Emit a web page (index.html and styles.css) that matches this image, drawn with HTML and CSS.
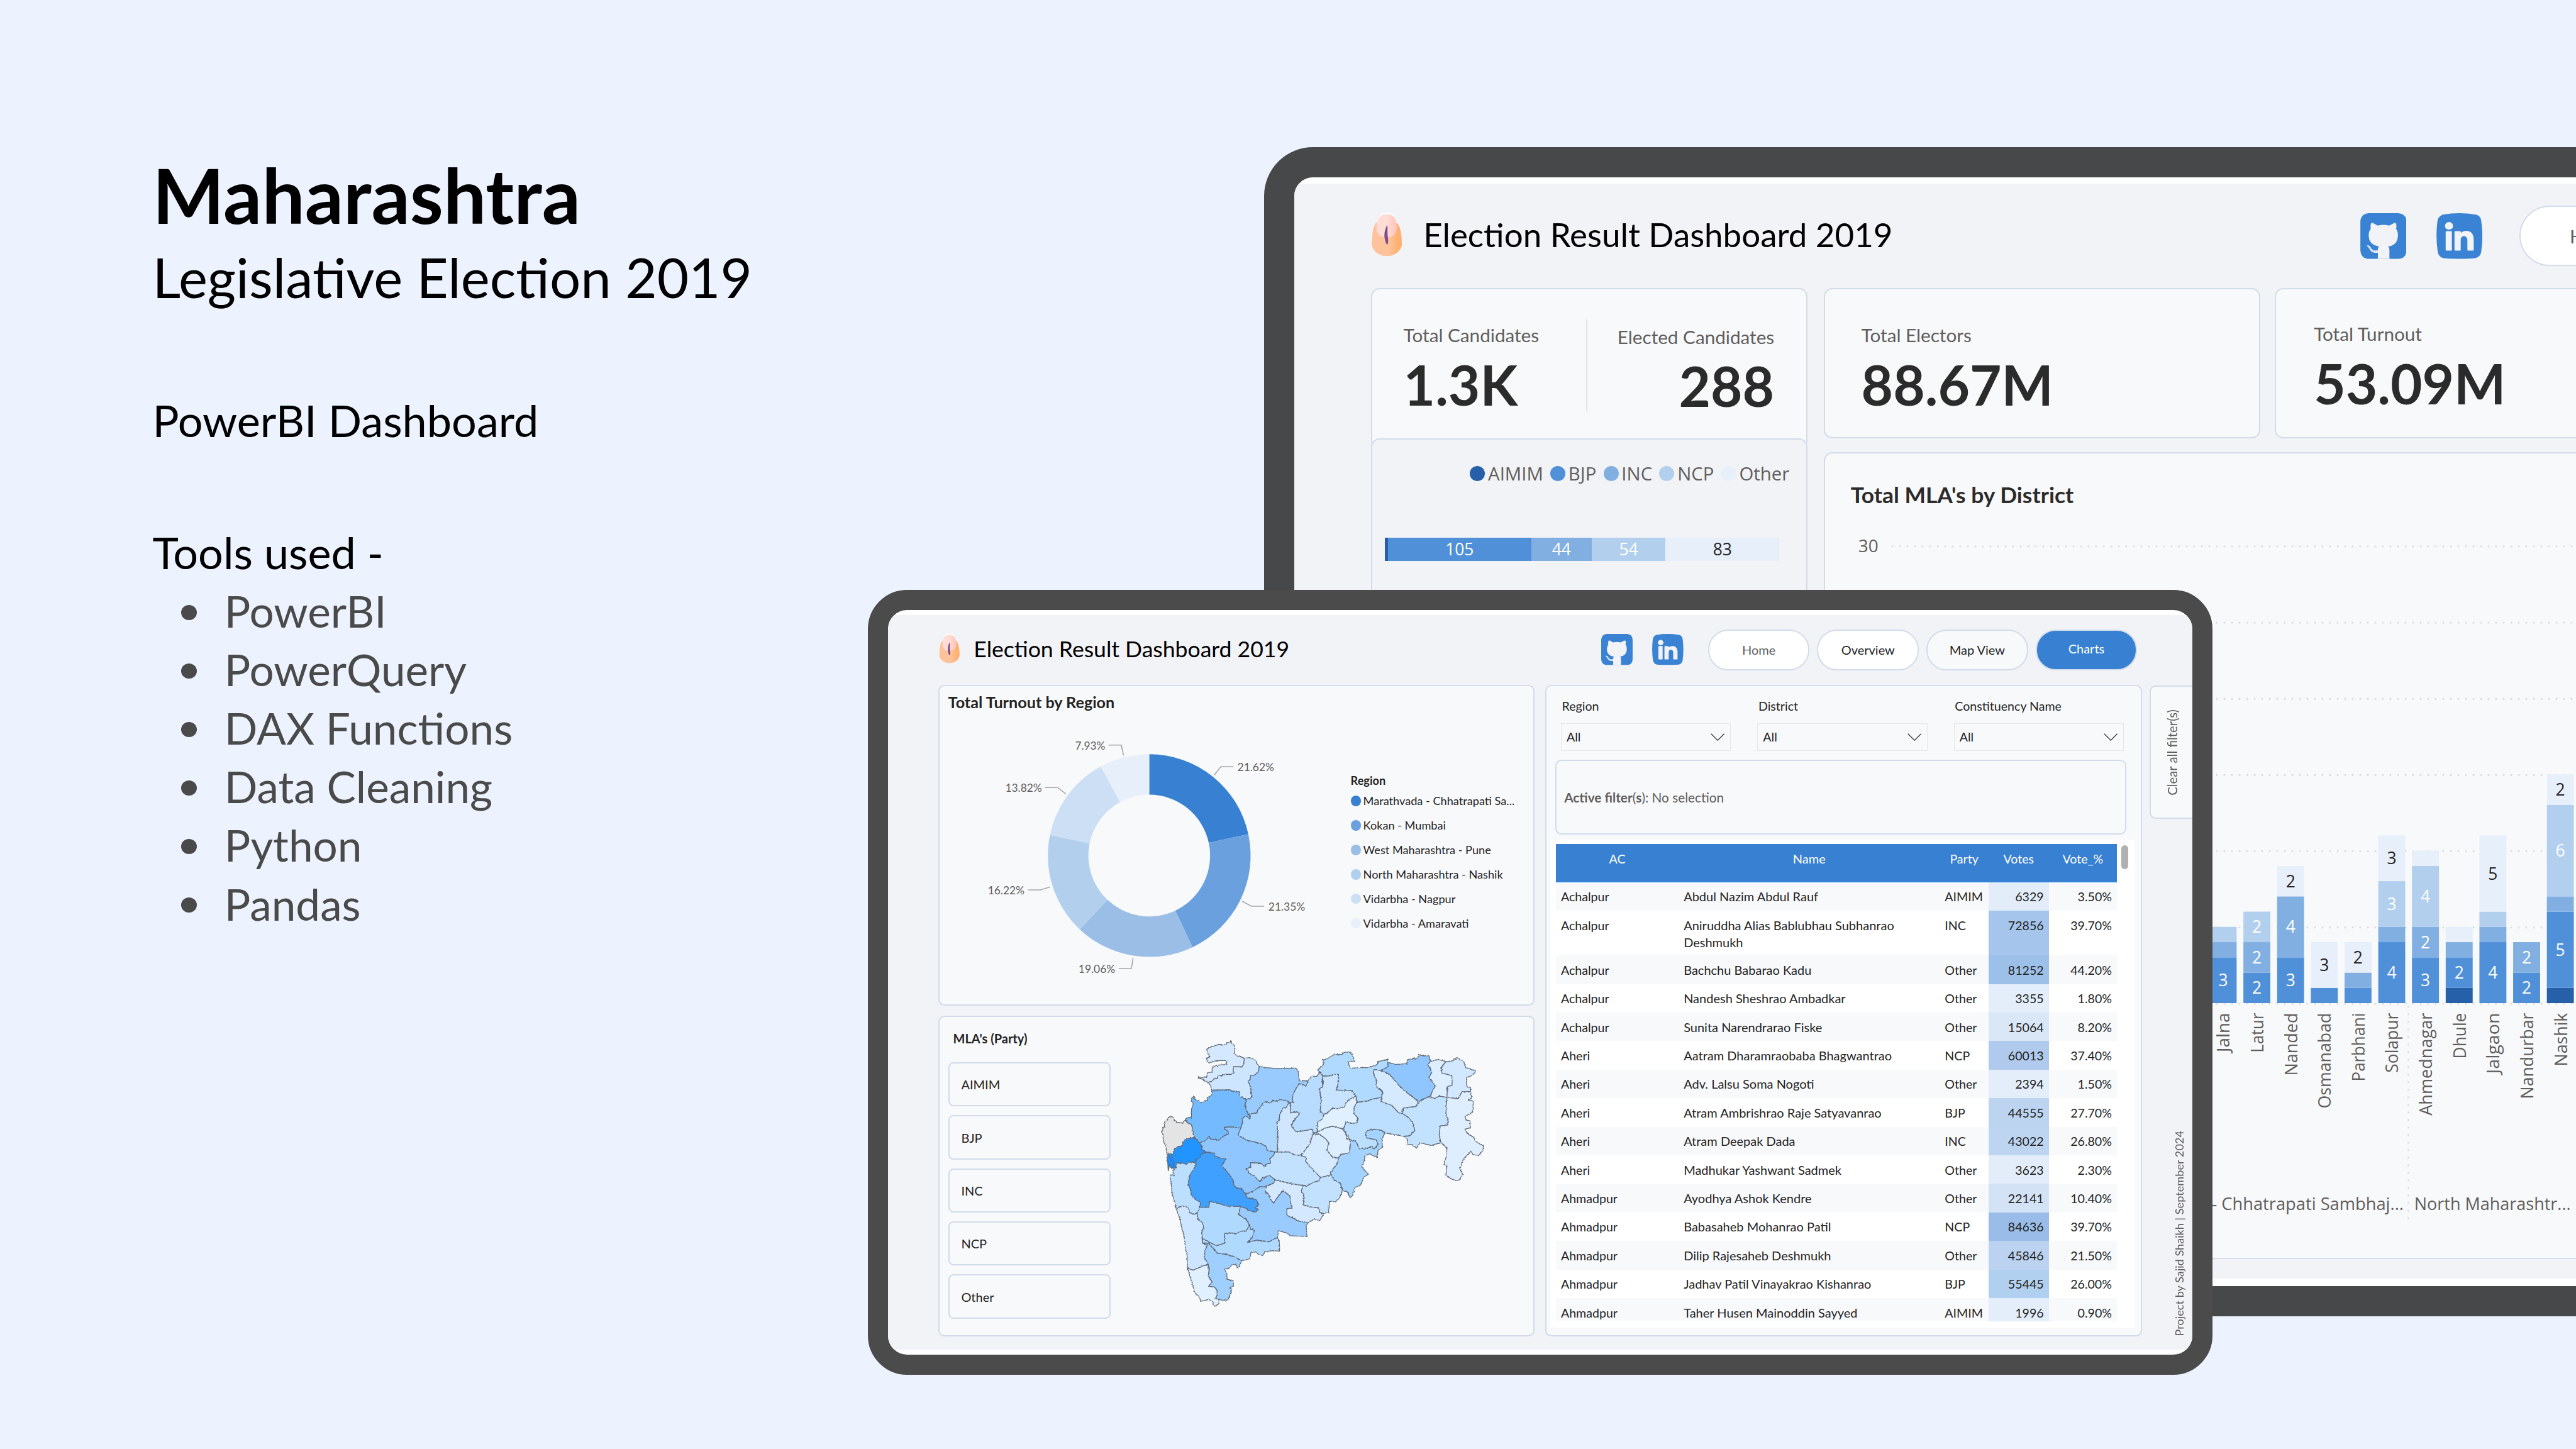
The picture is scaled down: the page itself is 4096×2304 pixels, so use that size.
FILE: index.html
```
<!DOCTYPE html>
<html lang="en">
<head>
<meta charset="utf-8">
<title>Maharashtra Legislative Election 2019</title>
<link rel="stylesheet" href="styles.css">
</head>
<body>
<svg class="defs" aria-hidden="true">
  <defs>
    <linearGradient id="skin" x1="0" x2="1" y1="0" y2="0"><stop offset=".55" stop-color="#ffc39b"/><stop offset=".85" stop-color="#ffb173"/></linearGradient>
    <linearGradient id="nail" x1="0" x2="1" y1="0" y2="0"><stop offset=".5" stop-color="#ffdcd5"/><stop offset="1" stop-color="#ffc3b9"/></linearGradient>
    <symbol id="finger" viewBox="0 0 181 262">
      <path d="M26 62C8 84 0 130 1 198C12 238 50 261 90 261C132 261 168 238 180 198C182 130 170 84 152 62Z" fill="url(#skin)"/>
      <path d="M32 56C38 20 60 0 90 0C120 0 142 20 148 56Z" fill="#fff"/>
      <path d="M34 56C38 24 62 9 90 9C118 9 142 24 146 56C150 72 152 80 151 96C150 128 124 150 90 150C56 150 30 128 29 96C28 80 30 72 34 56Z" fill="url(#nail)"/>
      <path d="M90 78C80 98 74 122 76 146C80 166 84 190 94 191C101 184 98 160 97 148C92 126 97 88 93 78Z" fill="#7d4f8c"/>
    </symbol>
    <symbol id="github" viewBox="0 0 276 274">
      <path d="M48 0H228Q276 6 276 50V224Q274 268 232 274H44Q4 268 0 224V50Q2 6 48 0Z" fill="#3a82d4"/>
      <path d="M62 94C60 78 61 66 66 58Q70 56 78 60L104 74Q138 66 172 74L198 61Q208 55 213 60C217 72 216 84 214 94Q225 108 225 134C223 172 205 194 166 199C171 204 174 212 174 222V268Q174 274 179 274H100Q105 274 105 268V236C86 239 68 236 58 220C52 210 48 200 38 196Q42 190 50 194C60 198 64 212 74 219C84 225 98 223 105 221Q104 206 112 199C72 193 50 172 50 134Q50 108 62 94Z" fill="#f1f3f7"/>
      <path d="M60 208l5 6M67 218l5 5M77 224l5 3M88 227h5M98 226h5" stroke="#3a82d4" stroke-width="3"/>
    </symbol>
    <symbol id="linkedin" viewBox="0 0 276 274">
      <path d="M38 8Q136 -8 236 8Q264 14 268 46Q281 136 268 230Q264 262 232 269Q136 278 40 269Q12 262 7 228Q-6 136 6 46Q10 18 38 8Z" fill="#3a82d4"/>
      <ellipse cx="75" cy="76" rx="24" ry="23" fill="#f1f3f7"/>
      <rect x="55" y="107" width="37" height="117" rx="5" fill="#f1f3f7"/>
      <path d="M108 112Q108 107 113 107H141Q146 107 146 119C158 104 190 100 208 116C220 128 223 142 223 160V219Q223 224 218 224H190Q185 224 185 219V160C182 130 146 130 145 160V219Q145 224 140 224H113Q108 224 108 219Z" fill="#f1f3f7"/>
    </symbol>
  </defs>
</svg>

<main class="stage">
  <section class="intro">
    <h1>Maharashtra</h1>
    <h2>Legislative Election 2019</h2>
    <p class="kind">PowerBI Dashboard</p>
    <p class="tools-title">Tools used -</p>
    <ul class="tools">
      <li>PowerBI</li>
      <li>PowerQuery</li>
      <li>DAX Functions</li>
      <li>Data Cleaning</li>
      <li>Python</li>
      <li>Pandas</li>
    </ul>
  </section>

  <section class="device device-back">
    <div class="screen">
      <header class="bar">
        <svg class="finger"><use href="#finger"/></svg>
        <div class="bar-title">Election Result Dashboard 2019</div>
        <svg class="logo"><use href="#github"/></svg>
        <svg class="logo"><use href="#linkedin"/></svg>
        <nav class="pills"><span class="pill muted">Home</span></nav>
      </header>
      <div class="overview">
        <div class="ov-left">
          <div class="card kpi-pair">
            <div class="kpi"><span class="kpi-label">Total Candidates</span><span class="kpi-value">1.3K</span></div>
            <div class="kpi-rule"></div>
            <div class="kpi kpi-right"><span class="kpi-label">Elected Candidates</span><span class="kpi-value">288</span></div>
          </div>
          <div class="card party-card">
            <div class="party-legend">
              <span class="key"><i class="dot c1"></i>AIMIM</span>
              <span class="key"><i class="dot c2"></i>BJP</span>
              <span class="key"><i class="dot c3"></i>INC</span>
              <span class="key"><i class="dot c4"></i>NCP</span>
              <span class="key"><i class="dot c5"></i>Other</span>
            </div>
            <div class="party-bar">
              <span class="c1" style="flex-grow:6"></span>
              <span class="c2" style="flex-grow:285">105</span>
              <span class="c3" style="flex-grow:120">44</span>
              <span class="c4" style="flex-grow:147">54</span>
              <span class="c5" style="flex-grow:226">83</span>
            </div>
          </div>
        </div>
        <div class="ov-right">
          <div class="kpi-row">
            <div class="card kpi-card"><div class="kpi"><span class="kpi-label">Total Electors</span><span class="kpi-value">88.67M</span></div></div>
            <div class="card kpi-card turnout"><div class="kpi"><span class="kpi-label">Total Turnout</span><span class="kpi-value">53.09M</span></div></div>
          </div>
          <div class="card chart-card">
            <svg class="district-chart" id="district" viewBox="3628 902 1792 1597"></svg>
          </div>
        </div>
      </div>
    </div>
  </section>

  <section class="device device-front">
    <div class="screen">
      <header class="bar">
        <svg class="finger"><use href="#finger"/></svg>
        <div class="bar-title">Election Result Dashboard 2019</div>
        <svg class="logo"><use href="#github"/></svg>
        <svg class="logo"><use href="#linkedin"/></svg>
        <nav class="pills">
          <span class="pill muted">Home</span>
          <span class="pill">Overview</span>
          <span class="pill soft">Map View</span>
          <span class="pill active">Charts</span>
        </nav>
      </header>
      <div class="charts">
        <div class="ch-left">
          <div class="card turnout-card">
            <div class="card-title">Total Turnout by Region</div>
            <div class="turnout-body">
              <svg class="donut" id="donut" viewBox="1867 1415 817 580"></svg>
              <div class="region-legend">
                <b>Region</b>
                <span><i class="d1"></i>Marathvada - Chhatrapati Sa...</span>
                <span><i class="d2"></i>Kokan - Mumbai</span>
                <span><i class="d3"></i>West Maharashtra - Pune</span>
                <span><i class="d4"></i>North Maharashtra - Nashik</span>
                <span><i class="d5"></i>Vidarbha - Nagpur</span>
                <span><i class="d6"></i>Vidarbha - Amaravati</span>
              </div>
            </div>
          </div>
          <div class="card map-card">
            <div class="party-list">
              <b>MLA's (Party)</b>
              <span>AIMIM</span><span>BJP</span><span>INC</span><span>NCP</span><span>Other</span>
            </div>
            <svg class="map" viewBox="0 0 1568 1568" preserveAspectRatio="none">
              <filter id="coast" x="-2%" y="-2%" width="104%" height="104%"><feTurbulence type="fractalNoise" baseFrequency=".11" numOctaves="2" seed="4"/><feDisplacementMap in="SourceGraphic" scale="9" xChannelSelector="R" yChannelSelector="G"/></filter>
              <g filter="url(#coast)">
              <polygon fill="#d4e9ff" points="265,123 285,110 322,96 330,101 352,98 355,88 366,87 373,77 378,93 388,101 389,148 400,158 413,163 433,171 431,202 422,218 385,217 383,232 385,251 376,258 348,258 315,268 312,283 305,278 285,296 272,303 262,295 250,292 256,286 232,281 226,271 240,277 266,271 267,248 289,247 290,219 317,208 352,205 355,190 345,183 305,185 282,195 273,198 263,170 281,165 272,150"/>
              <polygon fill="#cde5ff" points="433,171 458,168 470,175 483,182 488,199 500,215 495,245 478,262 463,262 458,285 450,295 461,325 463,350 467,378 458,388 441,392 413,377 411,352 380,348 369,342 287,343 283,318 272,303 285,296 305,278 312,283 315,268 348,258 376,258 385,251 383,232 385,217 422,218 431,202"/>
              <polygon fill="#99cbff" points="500,215 530,222 575,226 662,224 672,240 674,262 678,293 716,292 712,312 706,321 690,313 677,307 665,330 650,365 646,400 652,410 640,412 622,400 590,393 580,402 560,400 548,412 532,405 520,408 505,430 492,450 490,464 462,470 450,472 443,452 436,425 441,392 458,388 467,378 463,350 461,325 450,295 458,285 463,262 478,262 495,245"/>
              <polygon fill="#73baff" points="205,375 212,392 230,400 238,409 252,406 258,398 268,398 270,382 287,370 287,343 369,342 380,348 411,352 413,377 441,392 436,425 443,452 450,472 460,480 458,500 448,487 436,483 425,495 425,520 417,547 375,540 345,542 345,552 360,562 362,578 340,590 320,612 282,605 275,592 262,612 232,626 222,608 210,597 205,580 200,540 195,525 180,520 170,500 180,490 197,490 197,450 205,415 195,392 197,388"/>
              <polygon fill="#e4e4e4" points="170,505 180,520 195,525 200,540 205,580 210,597 175,605 160,622 158,640 130,650 122,660 112,690 97,684 88,684 82,640 75,625 72,585 65,570 68,548 78,540 76,515 90,502 96,488 105,483 118,490 120,505 130,510 132,518 148,515 158,522 165,505"/>
              <polygon fill="#2494ff" points="210,597 232,626 245,640 243,660 262,675 240,690 232,708 218,715 216,730 185,730 175,742 160,735 132,735 130,760 118,762 120,730 110,705 95,698 88,690 97,684 112,690 122,660 130,650 158,640 160,622 175,605"/>
              <polygon fill="#1a8aff" points="88,700 98,698 110,705 120,730 118,762 105,760 100,742 94,778 92,735"/>
              <polygon fill="#bcdeff" points="132,735 160,735 175,742 185,730 216,730 216,750 205,770 190,800 182,850 192,870 197,905 215,930 238,945 235,972 225,1000 210,1010 188,1000 185,975 165,965 145,970 130,982 122,940 112,905 108,860 102,800 112,797 122,805 115,785 120,762 130,760"/>
              <polygon fill="#cde5ff" points="130,982 145,970 165,965 185,975 188,1000 210,1010 222,1005 228,1040 245,1052 252,1080 243,1110 246,1165 268,1175 258,1205 255,1240 272,1278 240,1292 205,1310 180,1300 178,1230 170,1190 165,1130 152,1070 145,1030"/>
              <polygon fill="#e0f0ff" points="180,1300 205,1310 240,1292 272,1278 276,1310 272,1340 290,1375 272,1396 300,1400 312,1420 312,1445 305,1460 320,1468 320,1490 300,1505 292,1480 275,1467 240,1477 230,1450 212,1430 200,1380 190,1340"/>
              <polygon fill="#9ecfff" points="246,1163 272,1165 300,1200 310,1218 350,1225 395,1240 420,1260 415,1280 405,1298 395,1282 380,1278 365,1298 345,1305 355,1330 355,1358 385,1368 384,1395 365,1405 378,1412 370,1440 360,1470 345,1473 320,1468 305,1460 312,1445 312,1420 300,1400 272,1396 290,1375 272,1340 276,1310 272,1278 255,1240 258,1205 268,1175"/>
              <polygon fill="#afd9ff" points="246,1140 270,1155 308,1178 345,1165 345,1112 382,1110 395,1115 420,1100 440,1100 450,1080 455,1065 462,1090 478,1095 470,1130 450,1160 490,1148 520,1155 540,1158 562,1145 580,1135 588,1150 590,1208 560,1205 525,1210 515,1232 495,1225 485,1212 463,1213 457,1248 420,1260 395,1240 350,1225 310,1218 300,1200 272,1165 246,1163"/>
              <polygon fill="#afd9ff" points="235,972 275,972 278,940 320,952 355,965 415,968 408,1012 440,1035 455,1065 450,1080 440,1100 420,1100 395,1115 382,1110 345,1112 345,1165 308,1178 270,1155 246,1140 243,1110 252,1080 245,1052 228,1040 222,1005"/>
              <polygon fill="#3fa0ff" points="262,675 300,682 302,697 330,710 352,712 332,748 365,795 385,830 385,850 400,870 420,870 430,890 440,905 445,920 485,930 498,958 482,975 495,985 480,998 450,988 445,980 415,968 355,965 320,952 278,940 275,972 235,972 238,945 215,930 197,905 192,870 182,850 190,800 205,770 216,750 218,715 232,708 240,690"/>
              <polygon fill="#8fc6ff" points="232,626 262,612 275,592 282,605 320,612 340,590 362,578 360,562 345,552 345,542 375,540 417,547 405,582 440,610 505,628 530,645 535,665 568,675 565,690 548,710 550,735 530,740 525,755 505,735 460,733 462,755 442,765 455,790 478,805 500,833 515,815 545,800 570,825 565,840 530,862 500,862 480,880 445,900 430,890 420,870 400,870 385,850 385,830 365,795 332,748 352,712 330,710 302,697 300,682 262,675 243,660 245,640"/>
              <polygon fill="#abd6ff" points="425,495 436,483 448,487 458,500 460,480 450,472 462,470 490,464 492,450 505,430 520,408 532,405 548,412 560,400 580,402 590,393 622,400 635,412 620,435 605,440 590,475 588,510 577,515 580,545 582,600 580,675 568,675 535,665 530,645 505,628 440,610 405,582 417,547 425,520"/>
              <polygon fill="#d0e6ff" points="605,440 620,435 630,412 638,412 640,465 660,460 680,467 650,512 642,537 665,567 735,553 740,572 725,630 700,670 685,695 655,690 632,675 580,675 582,600 580,545 577,515 588,510 590,475"/>
              <polygon fill="#b8dcff" points="716,292 732,268 756,268 770,245 778,265 782,325 768,335 775,400 770,460 790,470 778,500 760,515 757,570 740,572 735,553 665,567 642,537 650,512 680,467 660,460 640,465 638,412 652,410 646,400 650,365 665,330 677,307 690,313 706,321 712,312"/>
              <polygon fill="#c8e3ff" points="782,267 822,265 830,258 852,258 853,290 844,342 912,345 930,375 905,390 885,410 880,430 850,442 825,440 800,468 790,470 770,460 775,400 768,335 782,325"/>
              <polygon fill="#b0daff" points="758,235 785,205 783,180 800,175 835,150 868,152 872,140 905,138 918,165 925,188 895,190 905,225 940,222 985,222 1025,205 1027,188 1062,182 1072,175 1072,218 1042,237 1010,232 1008,255 1020,285 1022,325 1048,350 1045,382 1005,390 980,402 935,408 930,375 912,345 844,342 853,290 852,258 830,258 822,265 782,267 776,250"/>
              <polygon fill="#e0f0ff" points="930,375 935,408 922,435 922,470 937,490 935,520 910,522 885,515 880,540 868,550 825,537 790,548 757,570 760,515 778,500 790,470 800,468 825,440 850,442 880,430 885,410 905,390"/>
              <polygon fill="#dceeff" points="757,570 790,548 825,537 868,550 885,575 888,605 905,610 900,680 860,690 850,708 822,700 800,665 808,625 795,605 770,582 750,580"/>
              <polygon fill="#d6eaff" points="740,572 750,580 770,582 795,605 808,625 800,665 822,700 852,708 845,740 815,785 820,797 772,812 745,780 705,725 710,705 685,695 700,670 725,630"/>
              <polygon fill="#c1e1ff" points="568,675 632,675 655,690 685,695 710,705 705,725 745,780 772,812 765,830 740,838 712,857 675,852 640,845 570,825 545,800 515,815 500,833 478,805 455,790 442,765 462,755 460,733 505,735 525,755 530,740 550,735 548,710 565,690"/>
              <polygon fill="#d4e9ff" points="570,825 640,845 675,852 695,855 685,890 697,900 697,960 735,972 765,975 768,1000 785,1010 768,1045 745,1035 718,1055 675,1047 650,1030 622,1015 622,980 645,975 640,950 635,910 605,883 580,920 562,950 550,930 540,900 525,890 530,862 565,840"/>
              <polygon fill="#c1e1ff" points="712,857 740,838 765,830 772,812 820,797 830,822 862,845 868,890 855,925 840,942 812,940 808,1000 785,1005 768,1000 765,975 735,972 697,960 697,900 685,890 695,855"/>
              <polygon fill="#99cbff" points="445,900 480,880 500,862 530,862 525,890 540,900 550,930 562,950 580,920 605,883 635,910 640,950 645,975 622,980 622,1015 650,1030 675,1047 718,1055 708,1070 712,1130 640,1125 620,1110 585,1098 580,1135 562,1145 540,1158 520,1155 490,1148 450,1160 470,1130 478,1095 462,1090 455,1065 440,1035 408,1012 415,968 445,980 450,988 480,998 495,985 482,975 498,958 485,930 445,920 440,905"/>
              <polygon fill="#a5d3ff" points="902,608 930,618 945,658 975,655 1000,645 1010,658 1028,635 1020,610 980,600 970,580 980,560 1010,552 1045,558 1058,575 1045,605 1048,650 1028,665 1025,705 990,685 970,695 965,735 955,755 985,795 965,810 950,855 925,865 915,910 903,920 892,890 868,880 862,845 830,822 820,797 815,785 845,740 852,708 860,690 900,680 905,640"/>
              <polygon fill="#bcdeff" points="935,408 980,402 1005,390 1045,382 1042,403 1090,425 1120,465 1137,468 1165,490 1185,525 1192,560 1170,588 1145,590 1080,577 1058,572 1045,558 1010,552 980,560 970,580 980,600 1020,610 1028,635 1010,658 1000,645 975,655 945,658 930,618 902,608 890,585 875,550 885,515 910,522 935,520 937,490 922,470 922,435"/>
              <polygon fill="#d6eaff" points="1010,232 1042,237 1080,258 1120,315 1150,350 1200,395 1205,410 1198,430 1140,440 1135,468 1120,465 1090,425 1042,403 1048,350 1022,325 1020,285 1008,255"/>
              <polygon fill="#8fc6ff" points="1072,195 1110,205 1155,200 1160,178 1205,170 1210,150 1225,158 1255,158 1262,188 1250,205 1268,245 1255,275 1283,320 1270,350 1258,378 1230,390 1212,405 1200,395 1150,350 1120,315 1080,258 1042,237 1072,218"/>
              <polygon fill="#dceeff" points="1262,188 1297,177 1330,190 1310,220 1312,250 1357,265 1358,318 1337,322 1335,382 1300,375 1280,388 1258,378 1270,350 1283,320 1255,275 1268,245 1250,205"/>
              <polygon fill="#d2e8ff" points="1330,190 1360,185 1380,168 1410,190 1418,220 1462,240 1450,262 1422,275 1422,325 1440,328 1440,350 1402,352 1385,388 1335,382 1337,322 1358,318 1357,265 1312,250 1310,220"/>
              <polygon fill="#c3e2ff" points="1212,405 1230,390 1258,378 1280,388 1300,375 1335,382 1330,480 1340,495 1338,530 1305,535 1300,580 1308,625 1265,640 1215,625 1200,655 1180,635 1160,635 1160,610 1145,590 1170,588 1192,560 1185,525 1165,490 1137,468 1140,440 1198,430"/>
              <polygon fill="#deeeff" points="1335,382 1385,388 1402,352 1440,350 1445,385 1432,395 1452,402 1450,460 1415,485 1420,502 1438,508 1438,545 1415,552 1430,580 1455,597 1462,620 1498,640 1495,665 1475,695 1450,688 1442,670 1410,710 1392,765 1405,795 1390,825 1375,828 1355,820 1330,800 1335,750 1320,740 1332,700 1335,655 1308,625 1300,580 1305,535 1338,530 1340,495 1330,480"/>
              </g>
            </svg>
          </div>
        </div>

        <div class="card ch-right">
          <div class="filters">
            <label>Region<span class="select">All<svg viewBox="0 0 28 16"><path d="M1 1L14 14L27 1"/></svg></span></label>
            <label>District<span class="select">All<svg viewBox="0 0 28 16"><path d="M1 1L14 14L27 1"/></svg></span></label>
            <label>Constituency Name<span class="select">All<svg viewBox="0 0 28 16"><path d="M1 1L14 14L27 1"/></svg></span></label>
          </div>
          <div class="active-filter"><p><b>Active filter</b>(<b>s</b>): No selection</p></div>
          <div class="table-wrap">
            <div class="table">
              <div class="row head"><span>AC</span><span>Name</span><span>Party</span><span>Votes</span><span>Vote_%</span></div>
              <div class="row"><span>Achalpur</span><span>Abdul Nazim Abdul Rauf</span><span>AIMIM</span><span style="background:#e2edf9">6329</span><span>3.50%</span></div>
              <div class="row tall"><span>Achalpur</span><span>Aniruddha Alias Bablubhau Subhanrao<br>Deshmukh</span><span>INC</span><span style="background:#a5c5ec">72856</span><span>39.70%</span></div>
              <div class="row"><span>Achalpur</span><span>Bachchu Babarao Kadu</span><span>Other</span><span style="background:#9dc0e9">81252</span><span>44.20%</span></div>
              <div class="row"><span>Achalpur</span><span>Nandesh Sheshrao Ambadkar</span><span>Other</span><span style="background:#e3eefa">3355</span><span>1.80%</span></div>
              <div class="row"><span>Achalpur</span><span>Sunita Narendrarao Fiske</span><span>Other</span><span style="background:#dae7f7">15064</span><span>8.20%</span></div>
              <div class="row"><span>Aheri</span><span>Aatram Dharamraobaba Bhagwantrao</span><span>NCP</span><span style="background:#afcaec">60013</span><span>37.40%</span></div>
              <div class="row"><span>Aheri</span><span>Adv. Lalsu Soma Nogoti</span><span>Other</span><span style="background:#e3eefa">2394</span><span>1.50%</span></div>
              <div class="row"><span>Aheri</span><span>Atram Ambrishrao Raje Satyavanrao</span><span>BJP</span><span style="background:#bdd4f0">44555</span><span>27.70%</span></div>
              <div class="row"><span>Aheri</span><span>Atram Deepak Dada</span><span>INC</span><span style="background:#bdd5f1">43022</span><span>26.80%</span></div>
              <div class="row"><span>Aheri</span><span>Madhukar Yashwant Sadmek</span><span>Other</span><span style="background:#e2edf9">3623</span><span>2.30%</span></div>
              <div class="row"><span>Ahmadpur</span><span>Ayodhya Ashok Kendre</span><span>Other</span><span style="background:#d3e2f5">22141</span><span>10.40%</span></div>
              <div class="row"><span>Ahmadpur</span><span>Babasaheb Mohanrao Patil</span><span>NCP</span><span style="background:#99bde8">84636</span><span>39.70%</span></div>
              <div class="row"><span>Ahmadpur</span><span>Dilip Rajesaheb Deshmukh</span><span>Other</span><span style="background:#bbd3f0">45846</span><span>21.50%</span></div>
              <div class="row"><span>Ahmadpur</span><span>Jadhav Patil Vinayakrao Kishanrao</span><span>BJP</span><span style="background:#b1cfee">55445</span><span>26.00%</span></div>
              <div class="row last"><span>Ahmadpur</span><span>Taher Husen Mainoddin Sayyed</span><span>AIMIM</span><span style="background:#e3eefa">1996</span><span>0.90%</span></div>
            </div>
            <div class="thumb"></div>
          </div>
        </div>

        <div class="ch-side">
          <div class="clear-tab"><span>Clear all filter(s)</span></div>
          <span class="credit">Project by Sajid Shaikh | September 2024</span>
        </div>
      </div>
    </div>
  </section>
</main>
<script src="charts.js"></script>
</body>
</html>
```
FILE: styles.css
```
/* 1rem = 100 design units */
html { font-size: 80px; }
* { box-sizing: border-box; }
body { margin: 0; font-family: Lato, "Open Sans", sans-serif; color: #252423; }
h1, h2, p, ul { margin: 0; padding: 0; font-weight: 400; }
.defs { position: absolute; width: 0; height: 0; }
.stage { position: relative; width: 51.2rem; height: 28.8rem; overflow: hidden; background: #ecf3ff; white-space: nowrap; }

/* intro column */
.intro { padding: 3.08rem 0 0 3.03rem; color: #000; }
.intro h1 { font-size: 1.512rem; line-height: 1.6rem; font-weight: 700; }
.intro h2 { font-size: 1.088rem; line-height: 1.3rem; margin-top: .18rem; }
.intro p { font-size: .878rem; line-height: 1.163rem; }
.tools li { font-size: .866rem; line-height: 1.163rem; }
.kind { margin-top: 1.61rem; }
.tools-title { margin-top: 1.47rem; }
.tools { list-style: none; color: #4a4a4a; }
.tools li { display: flex; align-items: center; gap: .545rem; padding-left: .575rem; }
.tools li::before { content: ""; width: .31rem; height: .3rem; border-radius: 50%; background: #4a4a4a; margin-top: .06rem; }

/* devices */
.device { position: absolute; overflow: hidden; background: #fff; }
.device-back { left: 25.12rem; top: 2.92rem; width: 30rem; height: 23.24rem; border: .6rem solid #474849; border-radius: .97rem; padding: .13rem 0 .145rem; }
.device-front { left: 17.245rem; top: 11.72rem; width: 26.725rem; height: 15.61rem; border: .4rem solid #4b4b4b; border-radius: .78rem; padding: .1rem 0 .105rem; }
.screen { height: 100%; background: #f1f3f7; display: flex; flex-direction: column; }
.card { background: #f8f9fb; border: .025rem solid #d2dcea; border-radius: .12rem; }

/* header */
.bar { display: flex; align-items: center; flex: none; color: #000; }
.bar-title { flex: none; }
.pills { display: flex; color: #252423; }
.pill { display: flex; align-items: center; justify-content: center; flex: none; background: #fff; border: .025rem solid #d2dcea; }
.pill.muted { color: #605e5c; }
.pill.soft { background: #f8f9fb; }
.pill.active { background: #3880d2; color: #fff; padding-bottom: .06rem; }
.device-back .bar { height: 2.08rem; padding-left: 1.54rem; }
.device-back .finger { width: .605rem; height: .87rem; margin-bottom: .07rem; }
.device-back .bar-title { width: 18.62rem; margin: 0 0 .07rem .425rem; font-size: .661rem; }
.device-back .logo { width: .92rem; height: .91rem; margin-right: .595rem; }
.device-back .pills { margin-left: .13rem; }
.device-back .pill { width: 3rem; height: 1.205rem; border-radius: .6rem; font-size: .37rem; }
.device-front .bar { height: 1.39rem; padding-left: 1.012rem; }
.device-front .finger { width: .417rem; height: .585rem; margin-bottom: .04rem; }
.device-front .bar-title { width: 12.47rem; margin: 0 0 .05rem .28rem; font-size: .4445rem; }
.device-front .logo { width: .625rem; height: .62rem; margin-right: .395rem; }
.device-front .pills { margin-left: .085rem; gap: .15rem; }
.device-front .pill { width: 2.02rem; height: .81rem; border-radius: .4rem; font-size: .25rem; }

/* back screen: overview page */
.overview { display: flex; flex: 1; padding: 0 0 .385rem 1.53rem; gap: .32rem; }
.ov-left { width: 8.68rem; flex: none; display: flex; flex-direction: column; }
.ov-right { width: 17.98rem; flex: none; display: flex; flex-direction: column; gap: .28rem; }
.device-back .card { border-width: .03rem; border-radius: .17rem; }
.kpi { display: flex; flex-direction: column; gap: .185rem; }
.kpi-label { font-size: .371rem; line-height: .4rem; color: #605e5c; }
.kpi-value { font-size: 1.09rem; line-height: 1.2rem; font-weight: 700; color: #2b2b2b; }
.kpi-pair { height: 3.2rem; flex: none; display: flex; justify-content: space-between; padding: .71rem .64rem 0 .62rem; }
.kpi-rule { width: .025rem; height: 1.82rem; margin: -.11rem 0 0 .35rem; background: #e3e4e6; }
.kpi-right { align-items: flex-end; margin-top: .03rem; }
.device-back .party-card { flex: 1; margin-top: -.22rem; background: #f1f3f7; padding: .48rem .34rem 0 .25rem; }
.party-legend { display: flex; justify-content: flex-end; gap: .14rem; font: .367rem/.4rem "Open Sans", sans-serif; color: #605e5c; }
.key { display: flex; align-items: center; gap: .06rem; }
.dot { width: .3rem; height: .3rem; border-radius: 50%; }
.c1 { background: #2660a8; } .c2 { background: #5090d9; } .c3 { background: #82afe1; } .c4 { background: #b2d0ee; } .c5 { background: #e7effa; }
.party-bar { display: flex; width: 7.84rem; height: .46rem; margin-top: 1.075rem; font: .33rem/.47rem "Open Sans", sans-serif; color: #fff; text-align: center; }
.party-bar span { flex-basis: 0; }
.party-bar .c5 { color: #252423; }
.kpi-row { display: flex; gap: .28rem; height: 2.98rem; flex: none; }
.kpi-card { width: 8.68rem; flex: none; padding: .71rem 0 0 .72rem; }
.kpi-card.turnout { padding: .68rem 0 0 .755rem; }
.chart-card { flex: 1; }
.district-chart { display: block; width: 17.92rem; height: 15.97rem; }

/* svg chart text */
.seg { font: 400 33px "Open Sans", sans-serif; fill: #fff; text-anchor: middle; }
.seg.dark { fill: #252423; }
.axis { font: 400 35px "Open Sans", sans-serif; fill: #605e5c; }
.chart-title { font: 700 44px Lato, sans-serif; fill: #2b2b2b; }
.grid { stroke: #dcdde0; stroke-width: 3.5; stroke-dasharray: 3.5 11.5; }
.pct { font: 400 22px Lato, sans-serif; fill: #605e5c; }
.leader { fill: none; stroke: #a6a6a6; stroke-width: 2; }

/* front screen: charts page */
.charts { display: flex; flex: 1; padding: 0 0 .265rem 1.005rem; font-size: .245rem; }
.ch-left { width: 11.846rem; flex: none; display: flex; flex-direction: column; gap: .194rem; }
.ch-left .card { flex: none; height: 6.378rem; }
.turnout-card { padding-top: .12rem; }
.card-title { font-size: .315rem; line-height: .4rem; font-weight: 700; padding-left: .17rem; }
.turnout-body { display: flex; }
.donut { width: 8.17rem; height: 5.8rem; flex: none; }
.region-legend { display: flex; flex-direction: column; padding-top: 1.21rem; font-size: .227rem; }
.region-legend b { line-height: .31rem; }
.region-legend span { display: flex; align-items: center; height: .487rem; gap: .045rem; }
.region-legend i { width: .205rem; height: .205rem; border-radius: 50%; }
.d1 { background: #3880d2; } .d2 { background: #6ba0df; } .d3 { background: #9bbee7; } .d4 { background: #b2d0ee; } .d5 { background: #cddff5; } .d6 { background: #e7effa; }
.map-card { display: flex; padding-left: .17rem; }
.party-list { width: 3.235rem; flex: none; display: flex; flex-direction: column; gap: .175rem; padding-top: .2rem; font-size: .25rem; }
.party-list b { line-height: .45rem; padding-left: .1rem; margin-bottom: .08rem; }
.party-list span { height: .88rem; flex: none; display: flex; align-items: center; padding-left: .235rem; border: .025rem solid #d2dcea; border-radius: .1rem; }
.map { width: 7rem; height: 5.8rem; flex: none; margin: .19rem 0 0 .717rem; overflow: visible; }
.map polygon { stroke: #626a73; stroke-width: 1.3; stroke-linejoin: round; vector-effect: non-scaling-stroke; }

.ch-right { width: 11.86rem; flex: none; margin-left: .214rem; padding: .18rem 0 0 .08rem; }
.filters { display: flex; gap: .525rem; padding-left: .21rem; }
.filters label { width: 3.38rem; padding-left: .02rem; line-height: .45rem; }
.select { display: flex; align-items: center; justify-content: space-between; height: .54rem; margin: .115rem 0 0 -.02rem; border: .02rem solid #e6e7e9; padding: 0 .11rem 0 .1rem; }
.select svg { width: .28rem; height: .16rem; fill: none; stroke: #333; stroke-width: 1.6; }
.active-filter { width: 11.35rem; height: 1.48rem; margin: .185rem 0 0 .1rem; border: .025rem solid #d2dcea; border-radius: .12rem; display: flex; align-items: center; padding-left: .15rem; color: #605e5c; font-size: .26rem; }
.table-wrap { display: flex; align-items: flex-start; width: 11.62rem; height: 9.7rem; margin-top: .1rem; padding: .095rem 0 0 .11rem; background: #fff; }
.table { width: 11.15rem; flex: none; }
.row { display: grid; grid-template-columns: 2.44rem 5.19rem .97rem 1.197rem 1fr; height: .5675rem; line-height: .345rem; }
.row span { padding: .12rem .1rem 0; height: 100%; }
.row span:nth-child(2) { font-size: .25rem; }
.row span:nth-child(n+4) { text-align: right; }
.row:nth-child(even) { background: #f8f9fb; }
.row.tall { height: .89rem; }
.row.last { height: .467rem; }
.row.head { height: .755rem; background: #3880d2; color: #fff; border-bottom: .015rem solid #1a86ee; }
.row.head span, .row.head span:nth-child(n+4) { text-align: center; padding: .125rem 0 0; }
.thumb { width: .145rem; height: .47rem; margin: .025rem 0 0 .085rem; border-radius: .07rem; background: #b0b0b0; }

.ch-side { flex: 1; margin-left: .15rem; display: flex; flex-direction: column; justify-content: space-between; color: #605e5c; }
.ch-side span { writing-mode: vertical-rl; transform: rotate(180deg); line-height: .3rem; }
.clear-tab { height: 2.655rem; margin-top: .015rem; display: flex; align-items: center; padding-left: .28rem; font-size: .254rem; background: #f8f9fb; border: .025rem solid #d2dcea; border-right: 0; border-radius: .12rem 0 0 .12rem; }
.credit { width: .3rem; margin-left: .445rem; font-size: .227rem; }
```
FILE: charts.js
```
const colors = { a: "#2660a8", b: "#5090d9", i: "#82afe1", n: "#b2d0ee", o: "#e7effa" };

/* seats per district, stacked from the axis upwards */
const districts = [
  ["Jalna", { b: 3, i: 1, n: 1 }, 78],
  ["Latur", { b: 2, i: 2, n: 2 }, 79],
  ["Nanded", { b: 3, i: 4, o: 2 }, 125],
  ["Osmanabad", { b: 1, o: 3 }, 190],
  ["Parbhani", { b: 1, i: 1, o: 2 }, 136],
  ["Solapur", { b: 4, i: 1, n: 3, o: 3 }, 119],
  ["Ahmednagar", { b: 3, i: 2, n: 4, o: 1 }, 204],
  ["Dhule", { a: 1, b: 2, i: 1, o: 1 }, 91],
  ["Jalgaon", { b: 4, i: 1, n: 1, o: 5 }, 121],
  ["Nandurbar", { b: 2, i: 2 }, 171],
  ["Nashik", { a: 1, b: 5, i: 1, n: 6, o: 2 }, 106]
];
const base = 1994.5, unit = 30.3;
let out = `<text class="chart-title" x="3679" y="1001" textLength="443" lengthAdjust="spacingAndGlyphs">Total MLA's by District</text>
<text class="axis" x="3694" y="1098">30</text>`;
for (let v = 0; v <= 30; v += 5) {
  const y = 1995.8 - v * unit;
  out += `<line class="grid" x1="3760" x2="5400" y1="${y}" y2="${y}"/>`;
}
out += `<line class="grid" x1="4787.5" x2="4787.5" y1="2000" y2="2425"/>`;
districts.forEach(([name, seats, len], k) => {
  const x = 4392.4 + k * 67.02, mid = x + 26.8;
  let y = base;
  for (const p in seats) {
    const h = seats[p] * unit;
    y -= h;
    out += `<rect x="${x}" y="${y}" width="53.6" height="${h}" fill="${colors[p]}"/>`;
    if (seats[p] > 1) out += `<text class="seg${p === "o" ? " dark" : ""}" x="${mid}" y="${y + h / 2 + 12}">${seats[p]}</text>`;
  }
  out += `<text class="axis" transform="translate(${mid + 13} ${2014 + len}) rotate(-90)" textLength="${len}" lengthAdjust="spacingAndGlyphs">${name}</text>`;
});
out += `<text class="axis" x="4396" y="2406" textLength="382" lengthAdjust="spacingAndGlyphs">- Chhatrapati Sambhaj...</text>
<text class="axis" x="4799" y="2406" textLength="311" lengthAdjust="spacingAndGlyphs">North Maharashtr...</text>`;
document.getElementById("district").innerHTML = out;

/* turnout ring */
const shares = [[21.62, "#3880d2"], [21.35, "#6ba0df"], [19.06, "#9bbee7"], [16.22, "#b2d0ee"], [13.82, "#cddff5"], [7.93, "#e7effa"]];
const cx = 2283.7, cy = 1700.5, R = 201.5, r = 121;
const at = (t, q) => `${(cx + q * Math.sin(t)).toFixed(2)} ${(cy - q * Math.cos(t)).toFixed(2)}`;
let t0 = 0, ring = "";
for (const [s, c] of shares) {
  const t1 = t0 + s / 100 * 2 * Math.PI;
  ring += `<path fill="${c}" d="M${at(t0, R)}A${R} ${R} 0 0 1 ${at(t1, R)}L${at(t1, r)}A${r} ${r} 0 0 0 ${at(t0, r)}Z"/>`;
  t0 = t1;
}
[["21.62%", 2459, 1533, 73, "2413,1540.6 2426,1523.7 2451,1523.7"],
 ["21.35%", 2520.5, 1810, 73, "2468.5,1791.3 2486.7,1801.2 2511.8,1801.2"],
 ["19.06%", 2143, 1933.4, 73, "2251.6,1904.3 2248.2,1924.6 2223,1924.6"],
 ["16.22%", 1962.8, 1777.6, 73, "2086.9,1762.8 2067.8,1768.8 2042.6,1768.8"],
 ["13.82%", 1997.5, 1574, 73, "2118,1578 2101.6,1565.3 2076.5,1565.3"],
 ["7.93%", 2136.3, 1489.6, 60, "2232.6,1501.2 2228.2,1480.9 2203,1480.9"]
].forEach(([t, x, y, w, pts]) => {
  ring += `<polyline class="leader" points="${pts}"/><text class="pct" x="${x}" y="${y}" textLength="${w}" lengthAdjust="spacingAndGlyphs">${t}</text>`;
});
document.getElementById("donut").innerHTML = ring;
```
